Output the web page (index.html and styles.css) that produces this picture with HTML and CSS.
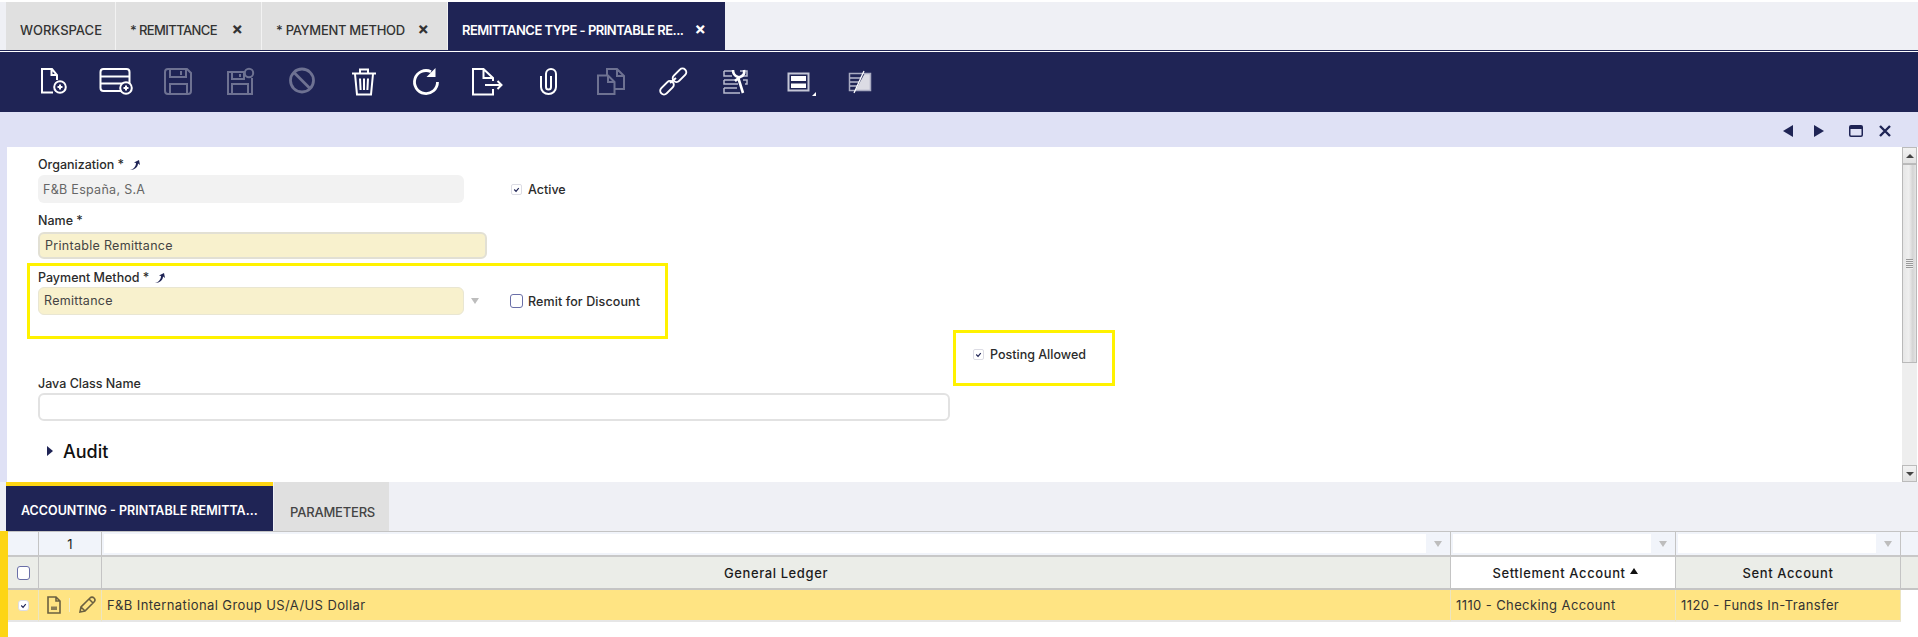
FILE: index.html
```html
<!DOCTYPE html>
<html lang="en">
<head>
<meta charset="utf-8">
<title>Remittance Type</title>
<link rel="stylesheet" href="styles.css">
</head>
<body>
<div class="app">
  <div class="tabs">
    <div class="tab tab-ws">WORKSPACE</div>
    <div class="tab tab-rem">* REMITTANCE<span class="x">×</span></div>
    <div class="tab tab-pay">* PAYMENT METHOD<span class="x">×</span></div>
    <div class="tab tab-active">REMITTANCE TYPE - PRINTABLE RE...<span class="x">×</span></div>
  </div>
  <div class="toolbar">
    <span class="tool"><svg viewBox="0 0 36 30" class="ic"><path d="M17 25.500H6V2h10l5 6v5M15.500 2.500v5.500h5.500"/><circle cx="24" cy="20" r="5.800"/><path d="M21.500 20h5M24 17.500v5"/></svg></span>
    <span class="tool"><svg viewBox="0 0 36 30" class="ic"><rect x="2.500" y="2" width="29" height="22" rx="3"/><path d="M2.500 9.500h29M2.500 16.500h29"/><circle cx="28" cy="21" r="5.800" fill="#1f2455"/><path d="M25.500 21h5M28 18.500v5"/></svg></span>
    <span class="tool off"><svg viewBox="0 0 36 30" class="ic"><path d="M8 2h19l4 4v18a3 3 0 0 1-3 3H8a3 3 0 0 1-3-3V5a3 3 0 0 1 3-3zM10 2v8h16V2M10 27V17h17v10M21 4v4"/></svg></span>
    <span class="tool off"><svg viewBox="0 0 36 30" class="ic"><path d="M23 5H6v22h24V11M10 5v7h12V5M10 27V17h16v10M18 7v3"/><circle cx="27" cy="6" r="4.200"/></svg></span>
    <span class="tool off"><svg viewBox="0 0 36 30" class="ic ic-bold"><circle cx="18" cy="13.500" r="11.500"/><path d="M10 5.500l16 16"/></svg></span>
    <span class="tool"><svg viewBox="0 0 36 30" class="ic"><path d="M6 6.500h24M14 6.500V2.500h8v4M9 7l2 20.500h14l2-20.500M14 11.500l.6 11.500M18 11.500V23M22 11.500l-.6 11.500"/></svg></span>
    <span class="tool"><svg viewBox="0 0 36 30" class="ic ic-bold"><path d="M29.500 15A11.500 11.500 0 1 1 23 4.700"/><path d="M27.500 1v9h-9z" class="solid"/></svg></span>
    <span class="tool"><svg viewBox="0 0 36 30" class="ic"><path d="M23 22v5.500H3V2h10.500L23 11v3M13.500 2v9H23M15 18h16M27.500 14l4 4-4 4"/></svg></span>
    <span class="tool"><svg viewBox="0 0 36 30" class="ic"><path d="M9 9v11a7.500 7 0 0 0 15 0V7a5 5 0 0 0-10 0v13a2.500 2.500 0 0 0 5 0V9"/></svg></span>
    <span class="tool off"><svg viewBox="0 0 36 30" class="ic"><path d="M4 8.500h10l6.500 6.500v12H4zM14 8.500V15h6.500M13 8V2h10l7 7v13h-9.500M23 2v7h7"/></svg></span>
    <span class="tool"><svg viewBox="0 0 36 30" class="ic"><rect x="15.500" y="4.500" width="16" height="7.500" rx="3.750" transform="rotate(-45 23.500 8.250)"/><rect x="3" y="17" width="16" height="7.500" rx="3.750" transform="rotate(-45 11 20.750)"/><path d="M14 16l6-5"/></svg></span>
    <span class="tool"><svg viewBox="0 0 36 30" class="ic"><path class="dim" d="M6 4h8M6 4v5h8M22 4h7v5h-4M6 13h13M6 13v4h14M25 13h4v4h-2M6 21v5h16M6 21h13"/><path class="thick" d="M15 3c0 4 2 6 5 7l5 16M26 3c1 4-1 6-4 7l-5 4"/></svg></span>
    <span class="tool"><svg viewBox="0 0 36 30" class="ic"><rect x="8.500" y="6.500" width="20" height="17" class="frame"/><rect x="11" y="9" width="15" height="5" class="fill-w"/><rect x="11" y="16.500" width="15" height="4.500" class="fill-w"/></svg><i class="corner"></i></span>
    <span class="tool"><svg viewBox="0 0 36 30" class="ic"><path d="M23 6h6v18H13z" class="fill-l"/><rect x="7.500" y="6.500" width="21" height="17" class="frame-t"/><path class="dim" d="M8 11h11M8 15h9M8 19h7"/><path class="thin" d="M22 4L12 26"/></svg></span>
  </div>
  <div class="ctrlbar">
    <svg viewBox="0 0 10 12" class="ctl c1"><path d="M10 0v12L0 6z"/></svg>
    <svg viewBox="0 0 10 12" class="ctl c2"><path d="M0 0v12l10-6z"/></svg>
    <svg viewBox="0 0 14 12" class="ctl c3"><path fill-rule="evenodd" d="M2 0h10a2 2 0 0 1 2 2v8a2 2 0 0 1-2 2H2a2 2 0 0 1-2-2V2a2 2 0 0 1 2-2zM1.500 4v6a.6.6 0 0 0 .5.5h10a.6.6 0 0 0 .5-.5V4z"/></svg>
    <svg viewBox="0 0 12 12" class="ctl c4"><path d="M1 1l10 10M11 1L1 11" class="ctl-x"/></svg>
  </div>
  <div class="main">
    <div class="form">
      <div class="frow r-org">
        <div class="lbl">Organization *<svg viewBox="0 0 10 10" class="pin"><path d="M0 10C4 9 6 6 6 3L4 2.500 9 0l1 5-2-1.500C8 7 5 10 0 10z"/></svg></div>
        <div class="cell-empty"></div>
        <div class="fld fld-ro">F&amp;B España, S.A</div>
        <label class="chk"><span class="box on"><svg viewBox="0 0 10 10"><path d="M2.500 5l2 2 3-3.500"/></svg></span>Active</label>
      </div>
      <div class="frow r-name">
        <div class="lbl">Name *</div>
        <div class="fld fld-name">Printable Remittance</div>
      </div>
      <div class="frow r-pay">
        <div class="lbl">Payment Method *<svg viewBox="0 0 10 10" class="pin"><path d="M0 10C4 9 6 6 6 3L4 2.500 9 0l1 5-2-1.500C8 7 5 10 0 10z"/></svg></div>
        <div class="cell-empty"></div>
        <div class="fld fld-pay">Remittance</div>
        <div class="sel-side"><i class="tri"></i><label class="chk chk-r"><span class="box big"></span>Remit for Discount</label></div>
      </div>
      <div class="post"><label class="chk"><span class="box on"><svg viewBox="0 0 10 10"><path d="M2.500 5l2 2 3-3.500"/></svg></span>Posting Allowed</label></div>
      <div class="frow r-java">
        <div class="lbl">Java Class Name</div>
        <div class="fld fld-java"></div>
      </div>
      <div class="audit"><i class="audit-tri"></i>Audit</div>
      <div class="hl hl-a"></div>
      <div class="hl hl-b"></div>
    </div>
    <div class="scroll">
      <div class="sb-btn"><i class="sb-up"></i></div>
      <div class="sb-thumb"><i class="grip"></i></div>
      <div class="sb-track"></div>
      <div class="sb-btn"><i class="sb-dn"></i></div>
    </div>
  </div>
  <div class="subtabs">
    <div class="stab stab-on">ACCOUNTING - PRINTABLE REMITTA...</div>
    <div class="stab stab-off">PARAMETERS</div>
  </div>
  <div class="gridwrap">
    <div class="grid">
      <div class="g-f g-sel"></div>
      <div class="g-f g-num">1</div>
      <div class="g-f g-in"><span class="inp"></span><i class="tri"></i></div>
      <div class="g-f g-in"><span class="inp"></span><i class="tri"></i></div>
      <div class="g-f g-in"><span class="inp"></span><i class="tri"></i></div>
      <div class="g-f g-end"></div>

      <div class="g-h g-chk"><span class="box big"></span></div>
      <div class="g-h"></div>
      <div class="g-h">General Ledger</div>
      <div class="g-h g-sorted">Settlement Account<i class="sort"></i></div>
      <div class="g-h">Sent Account</div>
      <div class="g-h g-end"></div>

      <div class="g-r g-chk"><span class="box on white"><svg viewBox="0 0 10 10"><path d="M2.500 5l2 2 3-3.500"/></svg></span></div>
      <div class="g-r g-act">
        <svg viewBox="0 0 14 18" class="doc"><path d="M1 1h8l4 4v12H1zM9 1v4h4"/><path d="M4 10.500h6v3.500H4z" class="doc-fill"/></svg>
        <i class="sep"></i>
        <svg viewBox="0 0 18 18" class="pen"><path d="M2 16l1-5L12 2a2 2 0 0 1 4 4l-9 9zM3 11l4 4M11 3l4 4"/></svg>
      </div>
      <div class="g-r g-t">F&amp;B International Group US/A/US Dollar</div>
      <div class="g-r g-t">1110 - Checking Account</div>
      <div class="g-r g-t">1120 - Funds In-Transfer</div>
    </div>
  </div>
</div>
</body>
</html>
```
FILE: styles.css
```css
* { box-sizing: border-box; }
html, body { margin: 0; padding: 0; }
body { background: #fff; font-family: "Inter", "Liberation Sans", sans-serif; color: #222; overflow: hidden; }
.app { width: 1918px; height: 637px; overflow: hidden; }

/* top tabs */
.tabs { height: 48px; margin-top: 2px; padding-left: 6px; background: #eff0f5; display: flex; }
.tab { height: 100%; display: flex; align-items: center; font-size: 13px; font-weight: 500; color: #333; background: #e0e0e0; padding: 7px 0 0 14px; white-space: nowrap; border-right: 1px solid #f2f2f2; }
.tab-ws { width: 110px; }
.tab-rem { width: 146px; letter-spacing: -.6px; }
.tab-pay { width: 186px; letter-spacing: -.3px; }
.tab-active { width: 277px; background: #1f2455; color: #fff; font-weight: 600; border-right: 0; letter-spacing: -.5px; }
.x { margin-left: auto; margin-right: 18px; font-size: 17px; font-weight: 700; line-height: 1; letter-spacing: 0; }
.tab-active .x { margin-right: 19px; }

/* toolbar */
.toolbar { height: 62px; background: #1f2455; box-shadow: inset 0 1px 0 #1f2455, inset 0 2px 0 #fff; display: flex; padding: 2px 0 0 23px; align-items: center; }
.tool { width: 62px; height: 30px; display: flex; align-items: center; justify-content: center; position: relative; }
.ic { width: 36px; height: 30px; fill: none; stroke: #fff; stroke-width: 2; }
.ic-bold { stroke-width: 2.800; }
.off .ic { stroke: #6e7292; }
.solid { fill: #fff; stroke: none; }
.dim { stroke: #b9bbce; stroke-width: 1.500; }
.thick { stroke-width: 2.600; }
.thin { stroke-width: 1.300; }
.frame { fill: #1f2455; stroke: #c4c6d6; }
.frame-t { stroke: #a9abc2; stroke-width: 1.500; }
.fill-w { fill: #fff; stroke: none; }
.fill-l { fill: #dcdce4; stroke: none; }
.corner { position: absolute; left: 45px; top: 25px; border-left: 4px solid transparent; border-bottom: 4px solid #fff; }

/* control bar */
.ctrlbar { height: 35px; background: #dfe1f5; display: flex; align-items: center; padding-left: 1783px; padding-top: 2px; }
.ctl { fill: #1f2455; display: block; height: 12px; }
.ctl-x { fill: none; stroke: #1f2455; stroke-width: 2.400; }
.c1 { width: 10px; }
.c2 { width: 10px; margin-left: 21px; }
.c3 { width: 14px; margin-left: 25px; }
.c4 { width: 12px; margin-left: 16px; }

/* form */
.main { height: 335px; display: flex; background: #dfe1f5; padding-left: 7px; }
.form { position: relative; flex: 1; background: #fff; padding: 10px 0 0 31px; }
.frow { display: grid; grid-template-columns: 426px 1fr; }
.lbl { height: 16px; font-size: 12.500px; line-height: 16px; color: #2b2b2b; font-weight: 500; grid-column: 1; display: flex; align-items: center; white-space: nowrap; }
.pin { width: 10px; height: 10px; margin-left: 6px; fill: #1f2455; }
.r-org .lbl { margin-bottom: 2px; }
.r-name { margin-top: 10px; }
.r-name .lbl { margin-bottom: 3px; }
.r-pay { margin-top: 11px; }
.r-pay .lbl { margin-bottom: 1px; }
.fld { height: 28px; border-radius: 6px; font-size: 12.500px; line-height: 26px; padding-left: 5px; color: #555; white-space: nowrap; letter-spacing: .3px; }
.fld-ro { background: #f2f2f2; color: #666; line-height: 29px; }
.fld-name { width: 449px; height: 27px; grid-column: 1 / 3; background: #f8f1cd; border: 2px solid #e2e0d4; color: #444; line-height: 24px; }
.fld-pay { background: #f8f1cd; border: 1px solid #e9e6d2; color: #444; }
.chk { display: flex; align-items: center; font-size: 12.500px; font-weight: 500; color: #2b2b2b; white-space: nowrap; }
.r-org .chk { padding-left: 47px; }
.box { width: 11px; height: 11px; margin-right: 6px; border: 1px solid #dcdce4; border-radius: 2px; display: inline-flex; background: #fff; flex: none; }
.box svg { width: 100%; height: 100%; fill: none; stroke: #1f2455; stroke-width: 1.300; }
.box.big { width: 13px; height: 14px; border: 1px solid #6a6fa8; border-radius: 3px; margin-right: 5px; }
.sel-side { display: flex; align-items: center; }
.tri { display: block; width: 0; height: 0; border-left: 4.500px solid transparent; border-right: 4.500px solid transparent; border-top: 6px solid #bdbdbd; }
.sel-side .tri { margin-left: 7px; }
.chk-r { margin-left: 31px; letter-spacing: .1px; }
.post { margin-top: 31px; height: 16px; padding-left: 935px; display: flex; align-items: center; }
.r-java { margin-top: 14px; }
.r-java .lbl { margin-bottom: 1px; grid-column: 1 / 3; }
.fld-java { grid-column: 1 / 3; width: 912px; background: #fff; border: 2px solid #e2e2e2; }
.audit { margin-top: 20px; height: 20px; padding-left: 9px; display: flex; align-items: center; font-size: 18px; font-weight: 500; color: #111; }
.audit-tri { width: 0; height: 0; border-top: 5px solid transparent; border-bottom: 5px solid transparent; border-left: 6px solid #1f2455; margin-right: 10px; }
.hl { position: absolute; border: 3px solid #fff200; pointer-events: none; }
.hl-a { left: 20px; top: 116px; width: 641px; height: 76px; }
.hl-b { left: 946px; top: 183px; width: 162px; height: 56px; }

/* scrollbar */
.scroll { width: 16px; background: #fff; display: flex; flex-direction: column; padding-right: 1px; }
.sb-btn { height: 17px; flex: none; background: linear-gradient(#f2f2f2, #e2e2e2); border: 1px solid #bbb; display: flex; align-items: center; justify-content: center; }
.sb-thumb { height: 199px; flex: none; background: linear-gradient(90deg, #e6e6e6, #efefef 45%, #d4d4d4 75%, #e4e4e4); border: 1px solid #b9b9b9; display: flex; align-items: center; justify-content: center; }
.grip { width: 7px; height: 10px; background: repeating-linear-gradient(#999 0 1px, #eee 1px 2px); }
.sb-track { flex: 1; background: #eeeeee; }
.sb-up, .sb-dn { width: 0; height: 0; border-left: 4px solid transparent; border-right: 4px solid transparent; }
.sb-up { border-bottom: 4px solid #444; }
.sb-dn { border-top: 4px solid #444; }

/* sub tabs */
.subtabs { height: 49px; background: #eff0f5; padding-left: 6px; display: flex; }
.stab { display: flex; align-items: center; font-size: 13px; white-space: nowrap; }
.stab-on { width: 267px; background: #1f2455; border-top: 4px solid #fdd514; color: #fff; font-weight: 600; font-size: 12.500px; padding: 4px 0 0 15px; }
.stab-off { width: 115px; margin-left: 1px; background: #e0e0e0; color: #444; font-weight: 500; padding: 10px 0 0 16px; letter-spacing: -.2px; }

/* grid */
.gridwrap { height: 106px; border-left: 8px solid #fdd514; }
.grid { display: grid; grid-template-columns: 31px 63px 1349px 225px 225px 17px; grid-template-rows: 25px 33px 32px; font-size: 13px; border-top: 1px solid #c4c4c4; }
.g-f { background: #f1f4fa; border-right: 1px solid #c4c4c4; border-bottom: 2px solid #c8c8c8; display: flex; align-items: center; }
.g-end { border-right: 0; }
.g-num { justify-content: center; font-size: 13px; }
.g-in { padding-left: 2px; }
.inp { flex: 1; height: 19px; background: #fff; }
.g-in .tri { margin: 0 8px; }
.g-h { background: #ebede8; border-right: 1px solid #c4c4c4; border-bottom: 2px solid #c4c4c4; display: flex; align-items: center; justify-content: center; font-weight: 500; font-size: 13px; color: #1b1b1b; letter-spacing: .6px; }
.g-h.g-end { border-right: 0; }
.g-sorted { background: #fff; padding-left: 4px; }
.sort { width: 0; height: 0; margin-left: 4px; margin-bottom: 4px; border-left: 4px solid transparent; border-right: 4px solid transparent; border-bottom: 6px solid #111; }
.g-r { background: #ffe483; border-right: 1px solid #ece5c0; border-bottom: 2px solid #e6e6e6; display: flex; align-items: center; }
.g-t { padding-left: 5px; color: #333; white-space: nowrap; letter-spacing: .4px; }
.g-chk { justify-content: center; }
.g-chk .box { margin: 0; }
.white { border-radius: 3px; }
.g-act { padding-left: 8px; }
.doc { width: 14px; height: 18px; fill: none; stroke: #6b6040; stroke-width: 1.600; }
.doc-fill { fill: #8a7d52; stroke: none; }
.sep { width: 1px; height: 14px; background: #f1ecce; margin: 0 8px; }
.pen { width: 18px; height: 18px; fill: none; stroke: #6b6040; stroke-width: 1.600; }
```
